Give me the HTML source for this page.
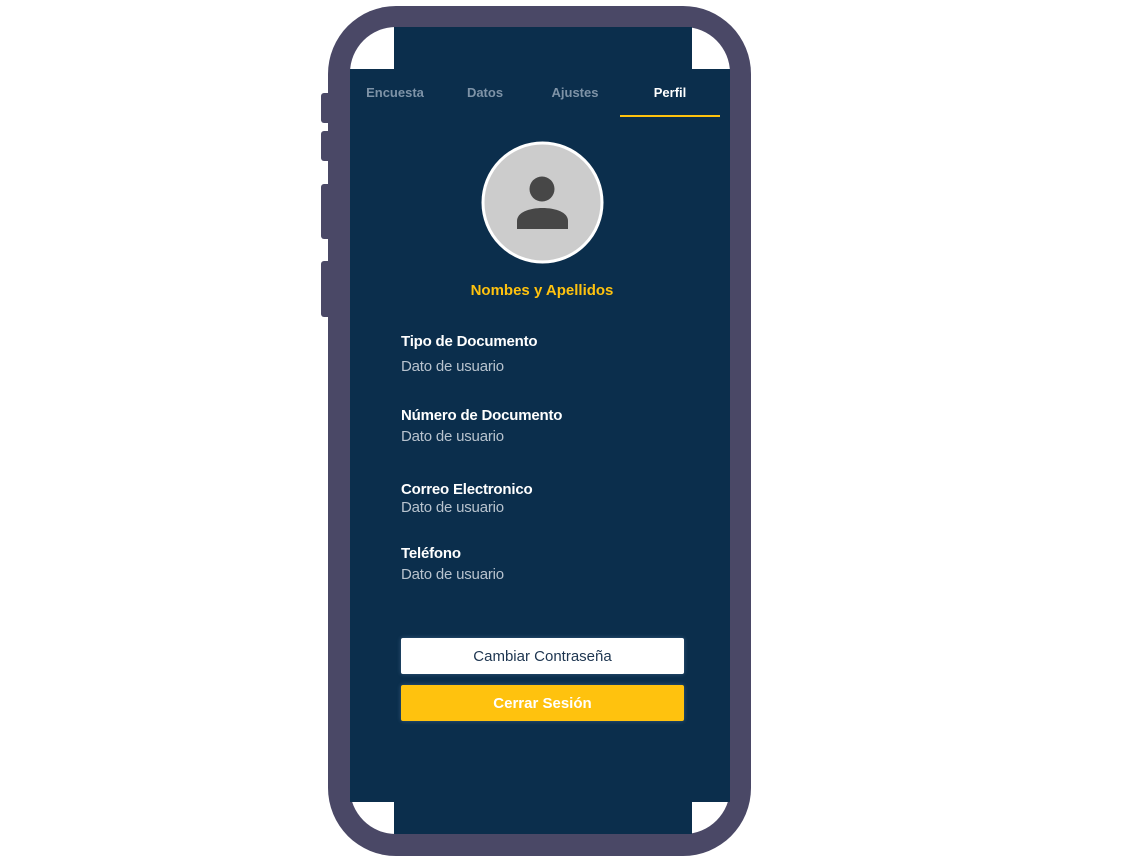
<!DOCTYPE html>
<html><head><meta charset="utf-8"><style>
*{margin:0;padding:0;box-sizing:border-box}
body{width:1123px;height:857px;background:#fff;position:relative;overflow:hidden;font-family:"Liberation Sans",sans-serif}
.a{position:absolute}
.frame{left:328px;top:6px;width:423px;height:850px;background:#4a4866;border-radius:68px}
.inner{left:350px;top:27px;width:380px;height:807px;background:#fff;border-radius:46px}
.dk{background:#0b2e4c}
.sb{left:321px;width:9px;background:#4a4866;border-radius:3px 0 0 3px}
.tab{top:85px;font-size:13px;font-weight:bold;color:#7e93a7;line-height:16px;text-align:center;width:90px}
.lbl{left:401px;font-size:15px;font-weight:bold;color:#fff;line-height:20px;letter-spacing:-0.2px}
.val{left:401px;font-size:15px;color:#b8c3ce;line-height:20px;letter-spacing:-0.2px}
.btn{left:401px;width:283px;height:36px;border-radius:2px;text-align:center;line-height:38px;font-size:15px;box-shadow:0 0 4px rgba(120,160,200,.4)}
</style></head><body>
<div class="a sb" style="top:93px;height:30px"></div>
<div class="a sb" style="top:131px;height:30px"></div>
<div class="a sb" style="top:184px;height:55px"></div>
<div class="a sb" style="top:261px;height:56px"></div>
<div class="a frame"></div>
<div class="a inner"></div>
<div class="a dk" style="left:394px;top:27px;width:298px;height:807px"></div>
<div class="a dk" style="left:350px;top:69px;width:380px;height:733px"></div>
<div class="a tab" style="left:350px">Encuesta</div>
<div class="a tab" style="left:440px">Datos</div>
<div class="a tab" style="left:530px">Ajustes</div>
<div class="a tab" style="left:620px;width:100px;color:#fff">Perfil</div>
<div class="a" style="left:620px;top:115px;width:100px;height:2px;background:#ffc20e"></div>
<svg class="a" style="left:480px;top:140px" width="126" height="126">
<circle cx="62.5" cy="62.5" r="59.5" fill="#cccccc" stroke="#fff" stroke-width="3"/>
<circle cx="62" cy="49" r="12.5" fill="#474747"/>
<path d="M37 89 V81 C37 72 50 68 62.5 68 C75 68 88 72 88 81 V89 Z" fill="#474747"/>
</svg>
<div class="a" style="left:350px;top:281px;width:384px;text-align:center;color:#ffc20e;font-weight:bold;font-size:15px;line-height:20px">Nombes y Apellidos</div>
<div class="a lbl" style="top:332px">Tipo de Documento</div>
<div class="a val" style="top:357px">Dato de usuario</div>
<div class="a lbl" style="top:406px">Número de Documento</div>
<div class="a val" style="top:427px">Dato de usuario</div>
<div class="a lbl" style="top:480px">Correo Electronico</div>
<div class="a val" style="top:498px">Dato de usuario</div>
<div class="a lbl" style="top:544px">Teléfono</div>
<div class="a val" style="top:565px">Dato de usuario</div>
<div class="a btn" style="top:638px;background:#fff;color:#1d3550">Cambiar Contraseña</div>
<div class="a btn" style="top:685px;background:#ffc20e;color:#fff;font-weight:bold">Cerrar Sesión</div>
</body></html>
